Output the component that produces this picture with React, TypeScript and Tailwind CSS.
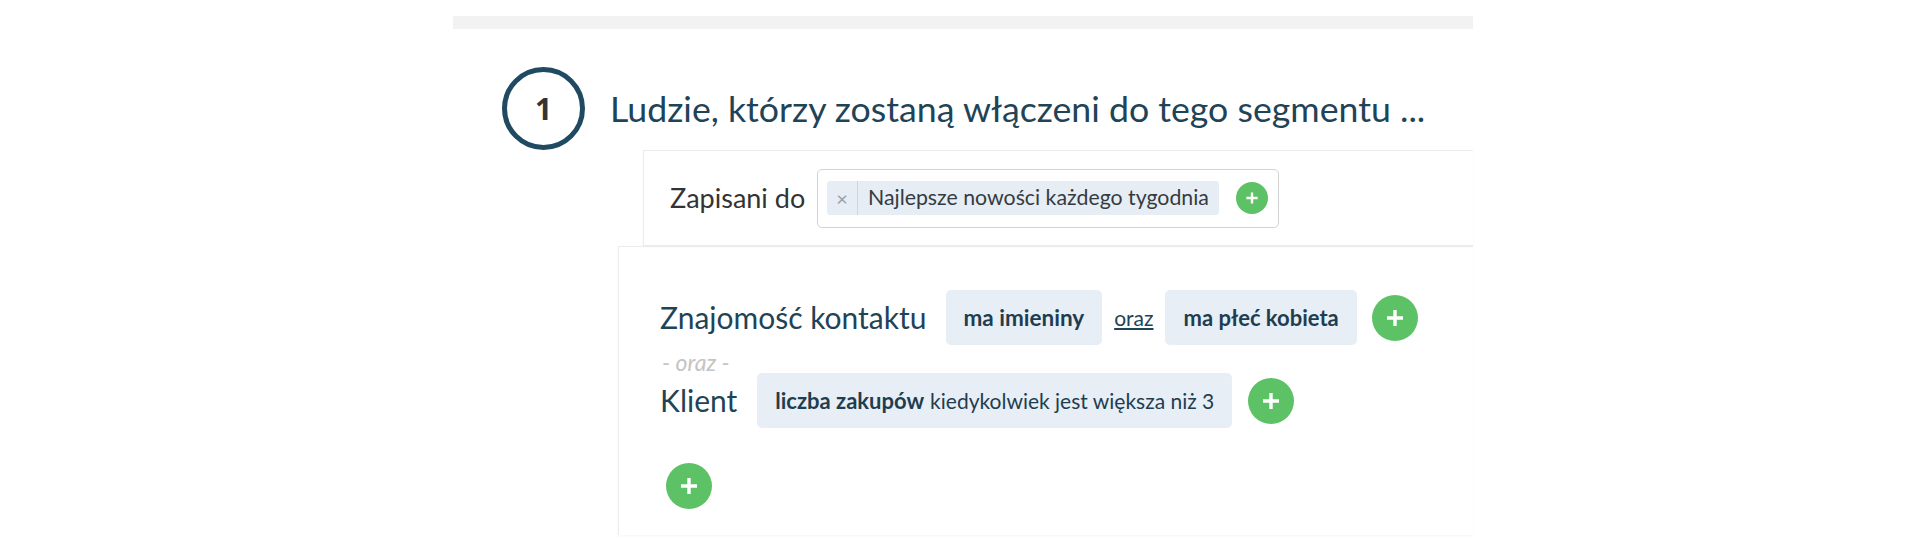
import React from "react";

function PlusButton({ size }: { size: "sm" | "lg" }) {
  const big = size === "lg";
  return (
    <button
      className={`flex shrink-0 items-center justify-center rounded-full bg-[#5dc165] ${
        big ? "h-[46px] w-[46px]" : "h-[32px] w-[32px]"
      }`}
    >
      <svg
        viewBox="0 0 20 20"
        className={big ? "h-[20px] w-[20px]" : "h-[14px] w-[14px]"}
        fill="none"
        stroke="white"
        strokeWidth={3.4}
        strokeLinecap="butt"
      >
        <path d="M10 2v16M2 10h16" />
      </svg>
    </button>
  );
}

function Pill({ children }: { children: React.ReactNode }) {
  return (
    <div className="flex h-[55px] shrink-0 items-center whitespace-nowrap rounded-[5px] bg-[#e7eef5] px-[18px] text-[21px] text-[#1f3d50]">
      {children}
    </div>
  );
}

export default function App() {
  return (
    <div className="min-h-[560px] bg-white font-['Lato',sans-serif]">
      <div className="ml-[453px] w-[1020px] pt-[16px]">
        <div className="h-[13px] bg-[#f2f2f2]" />

        {/* step heading */}
        <div className="mt-[38px] flex h-[83px] items-center gap-[25px] pl-[49px]">
          <div className="flex h-[83px] w-[83px] shrink-0 items-center justify-center rounded-full border-[5px] border-[#1f4a61]">
            <span className="font-['Open_Sans',sans-serif] text-[30px] font-bold text-[#333]">1</span>
          </div>
          <h1 className="whitespace-nowrap text-[35.7px] leading-none text-[#1f4357]">
            Ludzie, którzy zostaną włączeni do tego segmentu ...
          </h1>
        </div>

        {/* subscribed-to card */}
        <div className="ml-[190px] flex h-[96px] items-center border-b border-l border-t border-[#ececec] pl-[26px] shadow-[0_1px_3px_rgba(0,0,0,0.04)]">
          <div className="w-[147px] whitespace-nowrap text-[27px] text-[#333]">Zapisani do</div>
          <div className="flex h-[59px] w-[462px] items-center rounded-[5px] border border-[#d3d3d3] px-[9px]">
            <div className="flex h-[34px] items-center rounded-[3px] bg-[#e6edf4]">
              <span className="flex h-full w-[31px] items-center justify-center border-r border-[#cdd6df] text-[20px] text-[#9aa0a6]">
                ×
              </span>
              <span className="whitespace-nowrap px-[10px] text-[21.3px] text-[#353b40]">
                Najlepsze nowości każdego tygodnia
              </span>
            </div>
            <div className="ml-[17px]">
              <PlusButton size="sm" />
            </div>
          </div>
        </div>

        {/* conditions card */}
        <div className="ml-[165px] flex h-[289px] flex-col border-l border-t border-[#ececec] pl-[41px] pt-[43px] shadow-[0_1px_3px_rgba(0,0,0,0.04)]">
          <div className="flex h-[55px] items-center">
            <div className="mr-[19px] whitespace-nowrap text-[30px] text-[#1f4357]">Znajomość kontaktu</div>
            <Pill>
              <span className="text-[22.5px] font-bold">ma imieniny</span>
            </Pill>
            <a className="mx-[12px] text-[21px] text-[#1f4357] underline underline-offset-2">oraz</a>
            <Pill>
              <span className="text-[22px] font-bold">ma płeć kobieta</span>
            </Pill>
            <div className="ml-[15px]">
              <PlusButton size="lg" />
            </div>
          </div>

          <div className="flex h-[28px] items-end">
            <span className="pl-[2px] text-[23px] italic leading-[22px] text-[#c4c4c4]">- oraz -</span>
          </div>

          <div className="flex h-[55px] items-center">
            <div className="mr-[20px] text-[30px] text-[#1f4357]">Klient</div>
            <Pill>
              <span className="text-[22px] font-bold">liczba zakupów</span>
              <span className="ml-[6px]">kiedykolwiek jest większa niż 3</span>
            </Pill>
            <div className="ml-[16px]">
              <PlusButton size="lg" />
            </div>
          </div>

          <div className="ml-[6px] mt-[35px]">
            <PlusButton size="lg" />
          </div>
        </div>
      </div>
    </div>
  );
}
